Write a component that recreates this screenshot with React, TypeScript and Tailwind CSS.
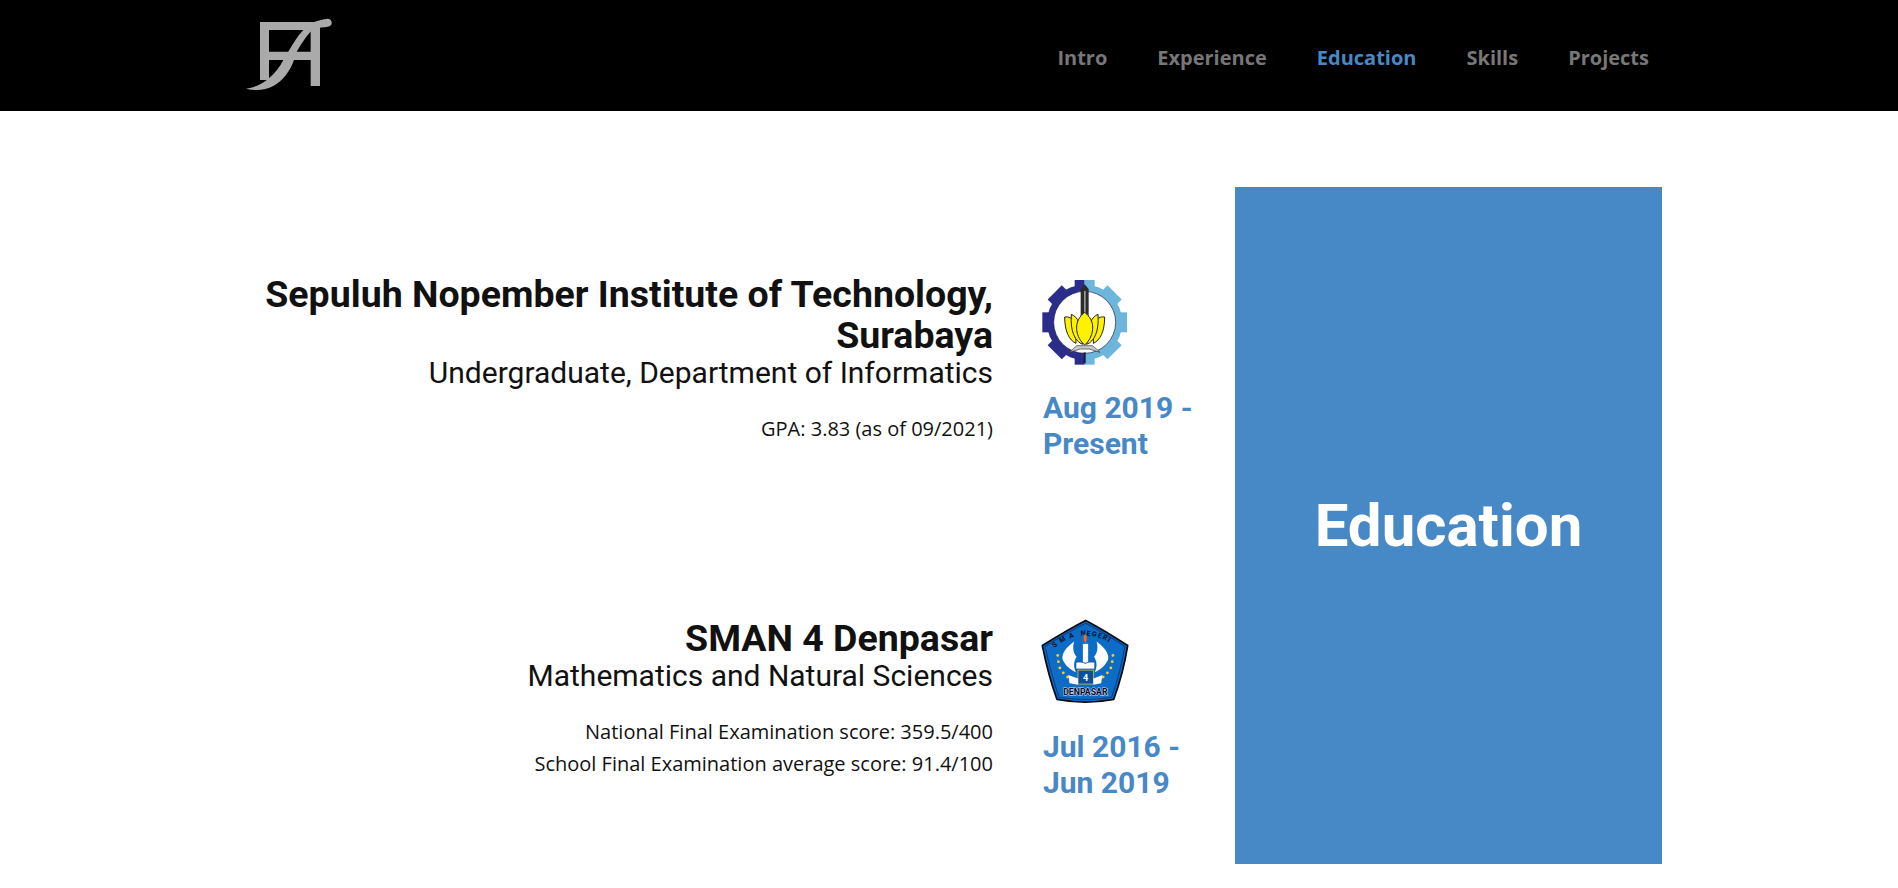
const navItems = ['Intro', 'Experience', 'Education', 'Skills', 'Projects'];

function Logo() {
  return (
    <svg width="100" height="90" viewBox="0 0 300 270" className="block" fill="#aaaaaa">
      <path d="M60 36H240V228H212V150H87V210H60ZM87 60V125H212V60Z" fillRule="evenodd" />
      <path d="M18 236C45 232 68 222 87 205C105 190 120 170 130 150C136 140 140 133 145 125C160 100 172 78 190 60C205 45 225 30 262 26C272 26 276 33 275 40C274 50 262 52 250 52C235 53 222 56 212 65C197 80 182 105 170 125C167 132 166 140 160 155C148 185 130 210 100 228C75 242 45 243 18 236Z" />
    </svg>
  );
}

function ItsLogo() {
  const teeth = [0, 45, 90, 135, 180, 225, 270, 315];
  return (
    <svg width="100" height="95" viewBox="3 0 300 285" className="block">
      <defs>
        <clipPath id="its-left">
          <rect x="0" y="0" width="152" height="285" />
        </clipPath>
        <clipPath id="its-right">
          <rect x="152" y="0" width="152" height="285" />
        </clipPath>
      </defs>
      <g clipPath="url(#its-left)" fill="#2a2e8a">
        {teeth.map((a) => (
          <rect key={a} x="122" y="15" width="60" height="40" transform={`rotate(${a} 152 142)`} />
        ))}
        <circle cx="152" cy="142" r="113" />
      </g>
      <g clipPath="url(#its-right)" fill="#6cb6dc">
        {teeth.map((a) => (
          <rect key={a} x="122" y="15" width="60" height="40" transform={`rotate(${a} 152 142)`} />
        ))}
        <circle cx="152" cy="142" r="113" />
      </g>
      <circle cx="152" cy="142" r="93" fill="#fff" stroke="#1b1b4a" strokeWidth="2" />
      <path d="M149 232H155V265H149Z" fill="#1a1a3a" />
      <path d="M152 28L164 42V130H140V42Z" fill="#2b2b2b" />
      <path d="M150 48H155V125H150Z" fill="#9a9a9a" />
      <path d="M92 126C104 124 116 130 124 142L126 205C106 196 92 170 92 126Z" fill="#fff200" stroke="#222" strokeWidth="3" />
      <path d="M212 126C200 124 188 130 180 142L178 205C198 196 212 170 212 126Z" fill="#fff200" stroke="#222" strokeWidth="3" />
      <path d="M112 118C122 122 130 130 134 142L146 208C124 200 108 170 112 118Z" fill="#fff200" stroke="#222" strokeWidth="3" />
      <path d="M192 118C182 122 174 130 170 142L158 208C180 200 196 170 192 118Z" fill="#fff200" stroke="#222" strokeWidth="3" />
      <path d="M152 112C168 124 178 142 176 164C174 184 164 200 152 210C140 200 130 184 128 164C126 142 136 124 152 112Z" fill="#fff200" stroke="#222" strokeWidth="3" />
      <path d="M106 232L128 212H176L198 232L165 222H139Z" fill="#c9c9c9" stroke="#333" strokeWidth="2" />
    </svg>
  );
}

function SmanLogo() {
  const dots = [
    [72, 128],
    [74, 146],
    [78, 164],
    [88, 178],
    [100, 190],
    [110, 202],
  ];
  return (
    <svg width="100" height="95" viewBox="7 10 286 271" className="block">
      <defs>
        <path id="sman-top" d="M56 112Q150 30 248 112" />
      </defs>
      <path d="M152 28C190 48 236 76 272 100C264 150 250 205 232 254C180 264 122 264 70 254C52 205 38 150 28 100C66 76 112 48 152 28Z" fill="#0d6cc6" stroke="#0b0b0b" strokeWidth="5" strokeLinejoin="round" />
      <path d="M152 36C188 54 230 80 264 102C256 150 243 200 226 248C178 256 124 256 76 248C59 200 46 150 36 102C72 80 114 54 152 36Z" fill="none" stroke="#0a3f86" strokeWidth="3" />
      <text fontSize="20" fontWeight="700" fontFamily="Roboto, sans-serif" fill="#0b0b2a" letterSpacing="3" className="whitespace-pre">
        <textPath href="#sman-top" startOffset="8">S M A  NEGERI</textPath>
      </text>
      {dots.map(([x, y]) => (
        <g key={x} fill="#f4d21f">
          <circle cx={x} cy={y} r="4" />
          <circle cx={302 - x} cy={y} r="4" />
        </g>
      ))}
      <path d="M119 88C96 104 82 124 86 140C94 158 108 170 124 176C116 160 118 144 126 132C116 120 114 104 119 88Z" fill="#fff" />
      <path d="M183 88C206 104 220 124 216 140C208 158 194 170 178 176C186 160 184 144 176 132C186 120 188 104 183 88Z" fill="#fff" />
      <path d="M150 66C156 74 158 82 151 92C144 84 144 74 150 66Z" fill="#f26b1d" />
      <rect x="144" y="95" width="15" height="54" fill="#fff" />
      <path d="M124 148C134 146 144 147 151 151C158 147 168 146 178 148V167H124Z" fill="#fff" stroke="#0a3f86" strokeWidth="2" />
      <rect x="130" y="170" width="44" height="40" fill="#0a4fa0" stroke="#f4d21f" strokeWidth="2" />
      <text x="152" y="202" textAnchor="middle" fontSize="26" fontWeight="700" fontFamily="Roboto, sans-serif" fill="#fff">4</text>
      <path d="M102 184L130 194V212L106 208Z" fill="#fff" />
      <path d="M200 184L174 194V212L196 208Z" fill="#fff" />
      <text x="151" y="240" textAnchor="middle" fontSize="25" fontWeight="700" fontFamily="Roboto, sans-serif" fill="#0b0b2a" stroke="#cfe3f7" strokeWidth="3" paintOrder="stroke">DENPASAR</text>
    </svg>
  );
}

function EducationRow({
  school,
  program,
  notes,
  logo,
  dates,
  textTop,
}: {
  school: string[];
  program: string;
  notes: string[];
  logo: React.ReactNode;
  dates: string[];
  textTop: string;
}) {
  return (
    <div className="flex">
      <div className={`w-[740px] text-right ${textTop}`}>
        <h3 className="font-['Roboto',sans-serif] text-[37.500px] leading-[41px] font-bold text-[#111]">
          {school.map((line) => (
            <div key={line}>{line}</div>
          ))}
        </h3>
        <p className="font-['Roboto',sans-serif] text-[30px] leading-[34px] text-[#111]">{program}</p>
        <div className="mt-[23px]">
          {notes.map((n) => (
            <p key={n} className="text-[20px] leading-[32px] text-[#111]">
              {n}
            </p>
          ))}
        </div>
      </div>
      <div className="ml-[42px] w-[170px]">
        {logo}
        <p className="mt-[20px] ml-[8px] font-['Roboto',sans-serif] text-[30px] leading-[36px] font-bold text-[#4788c7]">
          {dates.map((line) => (
            <span key={line} className="block">
              {line}
            </span>
          ))}
        </p>
      </div>
    </div>
  );
}

export default function App() {
  return (
    <div className="min-h-[888px] bg-white font-['Open_Sans',sans-serif]">
      <header className="flex h-[111px] items-start justify-between bg-black pr-[249px] pl-[240px]">
        <div className="pt-[10px]">
          <Logo />
        </div>
        <nav className="flex gap-[50px] pt-[44px]">
          {navItems.map((item) => (
            <a
              key={item}
              className={`text-[20px] leading-[28px] font-bold ${item === 'Education' ? 'text-[#4788c7]' : 'text-[#777]'}`}
            >
              {item}
            </a>
          ))}
        </nav>
      </header>
      <main className="flex pt-[76px] pr-[236px] pl-[253px]">
        <div className="flex-1 pt-[88px]">
          <div className="h-[339px]">
            <EducationRow
              textTop="-mt-[1px]"
              school={['Sepuluh Nopember Institute of Technology,', 'Surabaya']}
              program="Undergraduate, Department of Informatics"
              notes={['GPA: 3.83 (as of 09/2021)']}
              logo={<ItsLogo />}
              dates={['Aug 2019 -', 'Present']}
            />
          </div>
          <EducationRow
            textTop="pt-[4px]"
            school={['SMAN 4 Denpasar']}
            program="Mathematics and Natural Sciences"
            notes={['National Final Examination score: 359.5/400', 'School Final Examination average score: 91.4/100']}
            logo={<SmanLogo />}
            dates={['Jul 2016 -', 'Jun 2019']}
          />
        </div>
        <aside className="flex h-[677px] w-[427px] items-center justify-center bg-[#4788c7]">
          <h2 className="font-['Roboto',sans-serif] text-[60px] font-bold text-white">Education</h2>
        </aside>
      </main>
    </div>
  );
}
